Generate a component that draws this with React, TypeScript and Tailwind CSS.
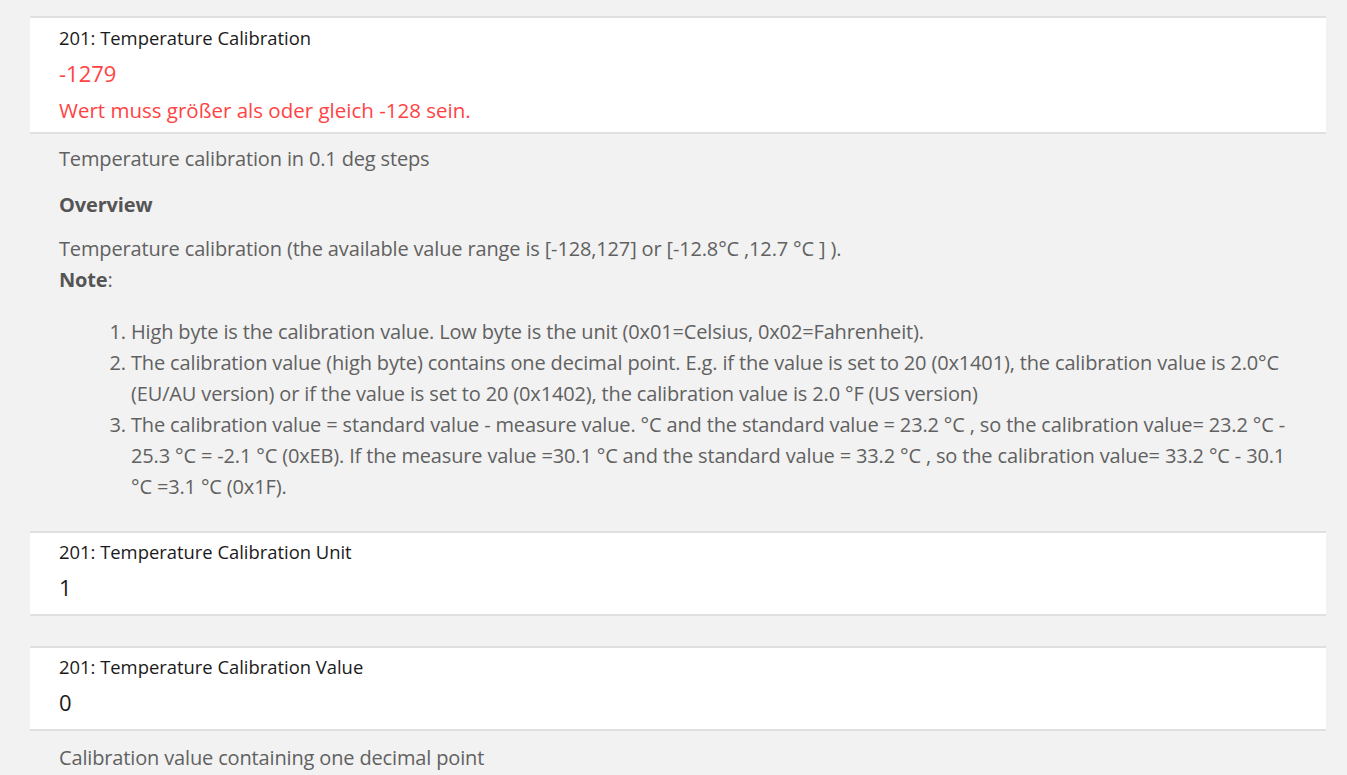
const font = "font-['Open_Sans',sans-serif]";

function FieldCard({
  label,
  value,
  error,
}: {
  label: string;
  value: string;
  error?: string;
}) {
  return (
    <div className={`border-y-2 border-[#e0e0e0] bg-white px-[29px] ${error ? 'pt-2 pb-2' : 'pt-[7px] pb-[13px]'}`}>
      <div className="text-[18.4px] leading-6 text-[#1a1a1a]">{label}</div>
      <div className={`mt-[9px] text-[22px] leading-7 ${error ? 'text-[#ff4343]' : 'text-[#1a1a1a]'}`}>{value}</div>
      {error && <div className="mt-[9px] text-[20.5px] leading-7 text-[#ff4343]">{error}</div>}
    </div>
  );
}

export default function App() {
  return (
    <div className={`min-h-screen bg-[#f2f2f2] pl-[30px] pr-[21px] pt-4 ${font}`}>
      <FieldCard label="201: Temperature Calibration" value="-1279" error="Wert muss größer als oder gleich -128 sein." />

      <div className="pl-[29px] pr-[16px] pt-[9px] pb-[29px] text-[20px] leading-[31px] tracking-[-0.15px] text-[#616161]">
        <p>Temperature calibration in 0.1 deg steps</p>
        <p className="mt-[15px] font-bold text-[#555]">Overview</p>
        <p className="mt-[13px]">
          Temperature calibration (the available value range is [-128,127] or [-12.8°C ,12.7 °C ] ).
          <br />
          <strong className="text-[#555]">Note</strong>:
        </p>
        <ol className="mt-[21px] list-decimal pl-[72px]">
          <li>High byte is the calibration value. Low byte is the unit (0x01=Celsius, 0x02=Fahrenheit).</li>
          <li>
            The calibration value (high byte) contains one decimal point. E.g. if the value is set to 20 (0x1401), the calibration value is 2.0°C (EU/AU version) or if the value is set to 20 (0x1402), the calibration value is 2.0 °F (US version)
          </li>
          <li>
            The calibration value = standard value - measure value. °C and the standard value = 23.2 °C , so the calibration value= 23.2 °C - 25.3 °C = -2.1 °C (0xEB). If the measure value =30.1 °C and the standard value = 33.2 °C , so the calibration value= 33.2 °C - 30.1 °C =3.1 °C (0x1F).
          </li>
        </ol>
      </div>

      <FieldCard label="201: Temperature Calibration Unit" value="1" />
      <div className="h-[30px]" />
      <FieldCard label="201: Temperature Calibration Value" value="0" />

      <div className="pl-[29px] pr-[16px] pt-[11px] pb-4 text-[20px] leading-[31px] tracking-[-0.15px] text-[#616161]">
        <p>Calibration value containing one decimal point</p>
      </div>
    </div>
  );
}
